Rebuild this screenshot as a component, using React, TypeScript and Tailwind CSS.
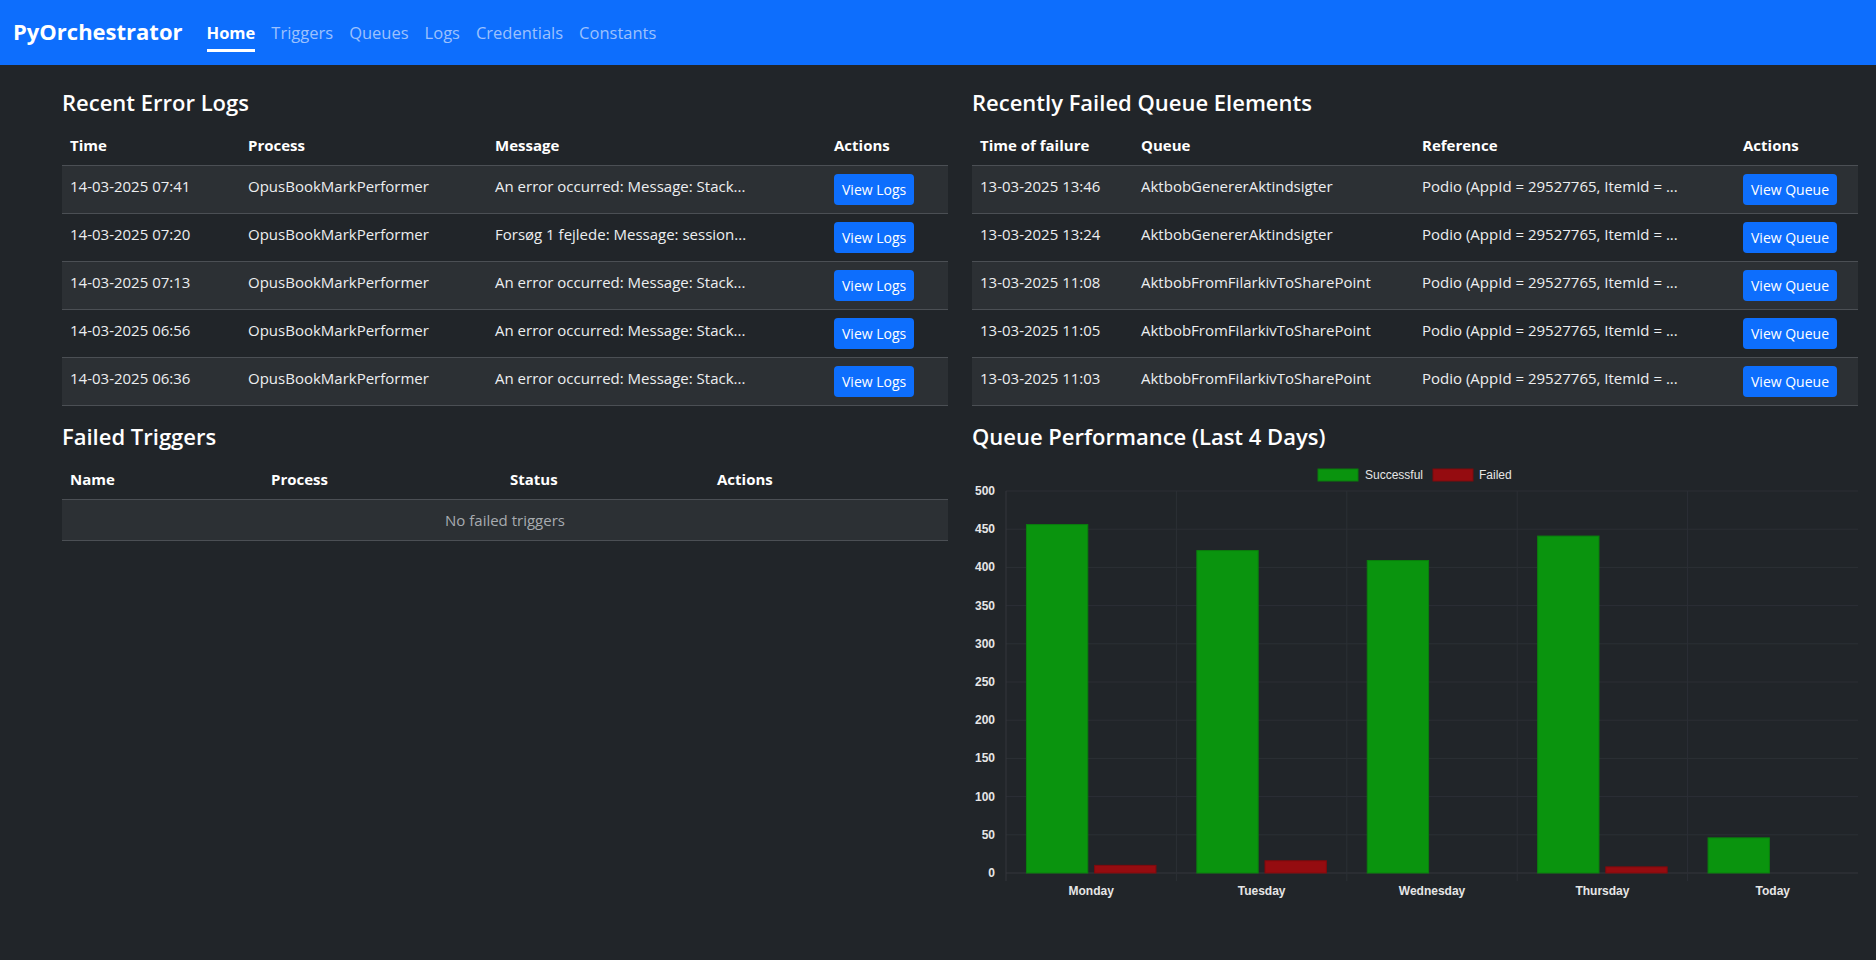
const errorLogs = [
  { time: "14-03-2025 07:41", process: "OpusBookMarkPerformer", message: "An error occurred: Message: Stack..." },
  { time: "14-03-2025 07:20", process: "OpusBookMarkPerformer", message: "Forsøg 1 fejlede: Message: session..." },
  { time: "14-03-2025 07:13", process: "OpusBookMarkPerformer", message: "An error occurred: Message: Stack..." },
  { time: "14-03-2025 06:56", process: "OpusBookMarkPerformer", message: "An error occurred: Message: Stack..." },
  { time: "14-03-2025 06:36", process: "OpusBookMarkPerformer", message: "An error occurred: Message: Stack..." },
];

const ref = "Podio (AppId = 29527765, ItemId = ...";

const failedQueue = [
  { time: "13-03-2025 13:46", queue: "AktbobGenererAktindsigter" },
  { time: "13-03-2025 13:24", queue: "AktbobGenererAktindsigter" },
  { time: "13-03-2025 11:08", queue: "AktbobFromFilarkivToSharePoint" },
  { time: "13-03-2025 11:05", queue: "AktbobFromFilarkivToSharePoint" },
  { time: "13-03-2025 11:03", queue: "AktbobFromFilarkivToSharePoint" },
];

const days = [
  { label: "Monday", ok: 456, failed: 10 },
  { label: "Tuesday", ok: 422, failed: 16 },
  { label: "Wednesday", ok: 409, failed: 0 },
  { label: "Thursday", ok: 441, failed: 8 },
  { label: "Today", ok: 46, failed: 0 },
];

const navLinks = ["Triggers", "Queues", "Logs", "Credentials", "Constants"];

const th = "text-left font-bold px-2 py-2 leading-6 border-b border-[#4b4f54] text-white";
const td = "px-2 py-2 leading-6 align-top border-b border-[#4b4f54]";

function Btn({ label }: { label: string }) {
  return (
    <button className="block bg-[#0d6efd] text-white text-[14px] leading-[21px] px-2 py-[5px] rounded-[4px]">
      {label}
    </button>
  );
}

function Heading({ children }: { children: string }) {
  return <h4 className="text-[22px] font-semibold leading-[29px] mb-2 text-white">{children}</h4>;
}

function Chart() {
  const left = 34;
  const right = 886;
  const top = 32;
  const zero = 414;
  const cat = (right - left) / 5;
  const scale = (zero - top) / 500;
  const ticks = [500, 450, 400, 350, 300, 250, 200, 150, 100, 50, 0];
  const grid = "#2c2f35";
  return (
    <svg width="886" height="470" className="block" fontFamily="'Liberation Sans', Arial, sans-serif">
      {/* legend */}
      <rect x="346" y="10" width="40" height="12" fill="#0a940e" stroke="#0a7d0d" />
      <text x="393" y="20" fontSize="12" fill="#e6e6e6">Successful</text>
      <rect x="461" y="10" width="40" height="12" fill="#950c10" stroke="#7d0a0d" />
      <text x="507" y="20" fontSize="12" fill="#e6e6e6">Failed</text>

      {/* grid */}
      {ticks.map((t) => {
        const y = zero - t * scale;
        return (
          <g key={t}>
            <line x1={left} x2={right} y1={y} y2={y} stroke={t === 0 ? "#34373d" : grid} />
            <text x="23" y={y + 4} fontSize="12" fontWeight="bold" fill="#e6e6e6" textAnchor="end">
              {t}
            </text>
          </g>
        );
      })}
      {[0, 1, 2, 3, 4].map((i) => (
        <line key={i} x1={left + i * cat} x2={left + i * cat} y1={top} y2={zero + 8} stroke={i === 0 ? "#34373d" : grid} />
      ))}

      {/* bars */}
      {days.map((d, i) => {
        const gx = left + i * cat + cat * 0.1 + cat * 0.4 * 0.05;
        const bw = cat * 0.4 * 0.9;
        const rx = gx + cat * 0.4;
        return (
          <g key={d.label}>
            <rect x={gx} y={zero - d.ok * scale} width={bw} height={d.ok * scale} fill="#0a940e" stroke="#0a800d" />
            {d.failed > 0 && (
              <rect x={rx} y={zero - d.failed * scale} width={bw} height={d.failed * scale} fill="#950c10" stroke="#800a0d" />
            )}
            <text x={left + i * cat + cat / 2} y="436" fontSize="12" fontWeight="bold" fill="#e6e6e6" textAnchor="middle">
              {d.label}
            </text>
          </g>
        );
      })}
    </svg>
  );
}

export default function App() {
  return (
    <div className="min-h-screen bg-[#212529] text-[#eceef0] font-['Open_Sans',sans-serif]">
      {/* Navbar */}
      <nav className="h-[65px] bg-[#0d6efd] flex items-start px-[13px]">
        <span className="mt-[16px] leading-[30px] text-[22px] font-bold text-white mr-[16px]">PyOrchestrator</span>
        <div className="flex pt-[21px]">
          <span className="px-2">
            <span className="block leading-6 text-[16.5px] font-bold text-white pb-1 border-b-[3px] border-white">Home</span>
          </span>
          {navLinks.map((l) => (
            <span key={l} className="px-2 leading-6 text-[16.5px] text-[#9cc1fe]">
              {l}
            </span>
          ))}
        </div>
      </nav>

      <div className="grid grid-cols-2 gap-x-6 pl-[62px] pr-[18px] pt-[23px]">
        {/* Left column */}
        <div>
          <Heading>Recent Error Logs</Heading>
          <table className="w-full table-fixed border-collapse mb-4 text-[15px]">
            <thead>
              <tr>
                <th className={`${th} w-[178px]`}>Time</th>
                <th className={`${th} w-[247px]`}>Process</th>
                <th className={`${th} w-[339px]`}>Message</th>
                <th className={th}>Actions</th>
              </tr>
            </thead>
            <tbody>
              {errorLogs.map((r, i) => (
                <tr key={i} className={i % 2 === 0 ? "bg-[#2c3034]" : ""}>
                  <td className={td}>{r.time}</td>
                  <td className={td}>{r.process}</td>
                  <td className={`${td} whitespace-nowrap`}>{r.message}</td>
                  <td className={td}>
                    <Btn label="View Logs" />
                  </td>
                </tr>
              ))}
            </tbody>
          </table>

          <Heading>Failed Triggers</Heading>
          <table className="w-full table-fixed border-collapse mb-4 text-[15px]">
            <thead>
              <tr>
                <th className={`${th} w-[201px]`}>Name</th>
                <th className={`${th} w-[239px]`}>Process</th>
                <th className={`${th} w-[207px]`}>Status</th>
                <th className={th}>Actions</th>
              </tr>
            </thead>
            <tbody>
              <tr className="bg-[#2c3034]">
                <td colSpan={4} className={`${td} text-center text-[#a7abb0]`}>
                  No failed triggers
                </td>
              </tr>
            </tbody>
          </table>
        </div>

        {/* Right column */}
        <div>
          <Heading>Recently Failed Queue Elements</Heading>
          <table className="w-full table-fixed border-collapse mb-4 text-[15px]">
            <thead>
              <tr>
                <th className={`${th} w-[161px]`}>Time of failure</th>
                <th className={`${th} w-[281px]`}>Queue</th>
                <th className={`${th} w-[321px]`}>Reference</th>
                <th className={th}>Actions</th>
              </tr>
            </thead>
            <tbody>
              {failedQueue.map((r, i) => (
                <tr key={i} className={i % 2 === 0 ? "bg-[#2c3034]" : ""}>
                  <td className={td}>{r.time}</td>
                  <td className={td}>{r.queue}</td>
                  <td className={`${td} whitespace-nowrap`}>{ref}</td>
                  <td className={td}>
                    <Btn label="View Queue" />
                  </td>
                </tr>
              ))}
            </tbody>
          </table>

          <Heading>Queue Performance (Last 4 Days)</Heading>
          <Chart />
        </div>
      </div>
    </div>
  );
}
